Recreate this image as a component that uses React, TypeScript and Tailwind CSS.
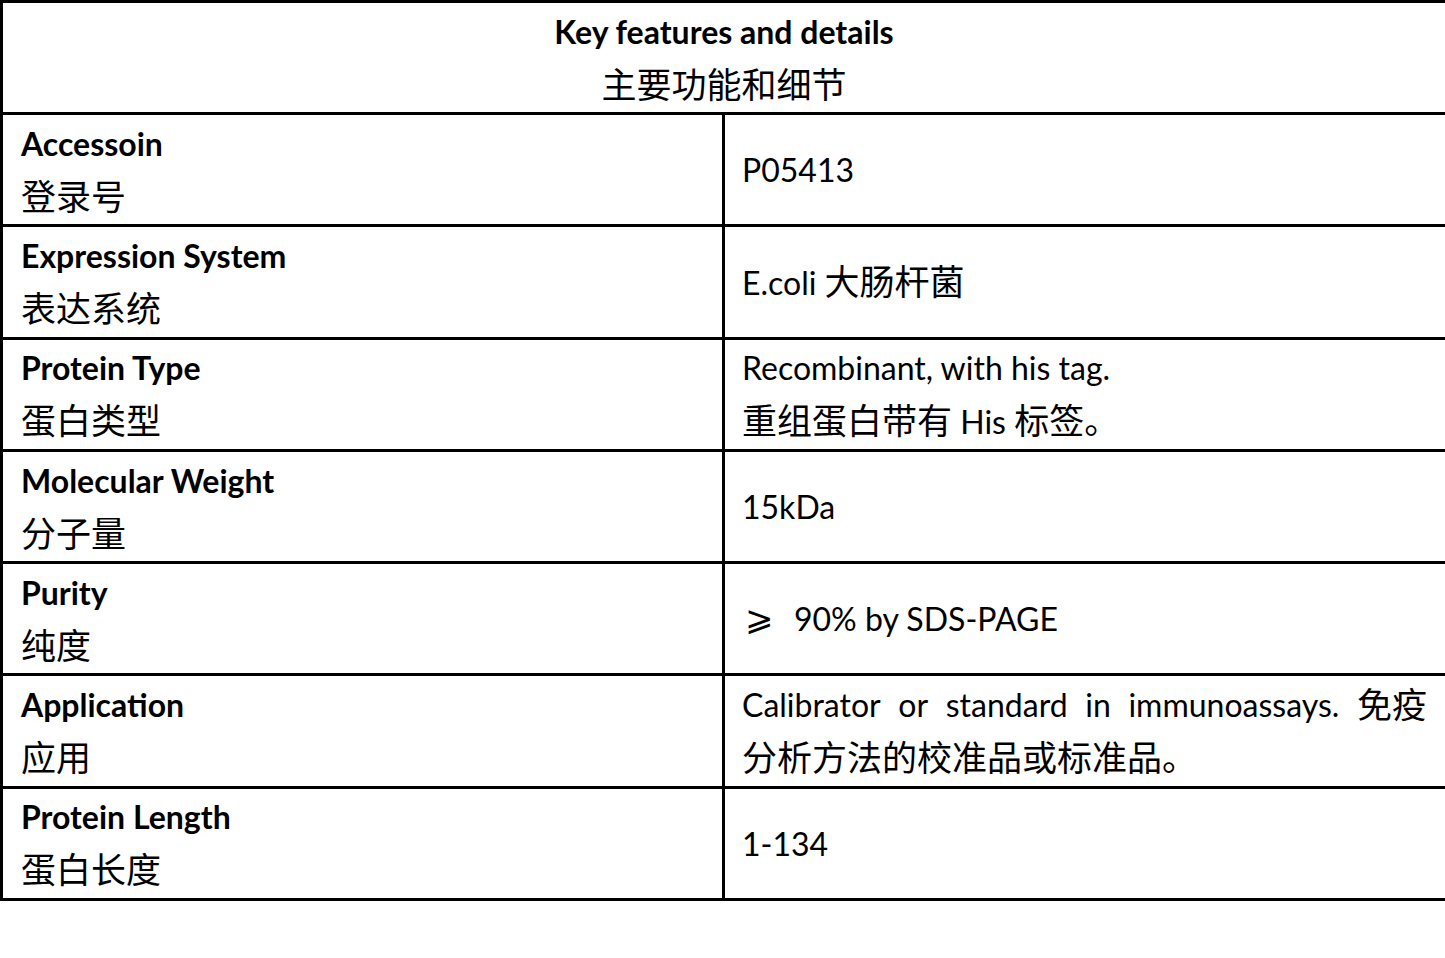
import React from "react";

const font = { fontFamily: "Lato, 'Noto Sans CJK SC', sans-serif" };

const Z = ({ children }: { children: React.ReactNode }) => (
  <span className="text-[35px]">{children}</span>
);

type Row = { en: string; zh: string; right: React.ReactNode };

const rows: Row[] = [
  { en: "Accessoin", zh: "登录号", right: <div>P05413</div> },
  {
    en: "Expression System",
    zh: "表达系统",
    right: (
      <div>
        E.coli <Z>大肠杆菌</Z>
      </div>
    ),
  },
  {
    en: "Protein Type",
    zh: "蛋白类型",
    right: (
      <div className="flex flex-col gap-[18px]">
        <div>Recombinant, with his tag.</div>
        <div>
          <Z>重组蛋白带有</Z> His <Z>标签。</Z>
        </div>
      </div>
    ),
  },
  { en: "Molecular Weight", zh: "分子量", right: <div>15kDa</div> },
  {
    en: "Purity",
    zh: "纯度",
    right: (
      <div className="flex items-center">
        <span className="inline-block w-[52px] pl-[3px] text-[34px]" style={{ fontFamily: "'DejaVu Sans', sans-serif", fontWeight: 200 }}>
          ⩾
        </span>
        <span>90% by SDS-PAGE</span>
      </div>
    ),
  },
  {
    en: "Application",
    zh: "应用",
    right: (
      <div className="flex flex-col gap-[18px] pr-[18px]">
        <div className="flex justify-between">
          <span>Calibrator</span>
          <span>or</span>
          <span>standard</span>
          <span>in</span>
          <span>immunoassays.</span>
          <Z>免疫</Z>
        </div>
        <div>
          <Z>分析方法的校准品或标准品。</Z>
        </div>
      </div>
    ),
  },
  { en: "Protein Length", zh: "蛋白长度", right: <div>1-134</div> },
];

export default function App() {
  return (
    <div className="w-full h-[958px] bg-white overflow-hidden text-black" style={font}>
      <div className="w-[1460px] border-t-[3px] border-l-[3px] border-black">
        <div className="h-[112px] border-b-[3px] border-black box-border flex flex-col items-center justify-center gap-[18px] w-[1442px] text-[32px] leading-[35px]">
          <div className="font-bold">Key features and details</div>
          <div className="text-[35px]">主要功能和细节</div>
        </div>
        {rows.map((r, i) => (
          <div key={i} className="h-[112.3px] border-b-[3px] border-black box-border flex text-[32px] leading-[35px]">
            <div className="w-[722px] border-r-[3px] border-black box-border pl-[18px] flex flex-col justify-center gap-[18px]">
              <div className="font-bold">{r.en}</div>
              <div className="text-[35px]">{r.zh}</div>
            </div>
            <div className="w-[720px] pl-[17px] flex flex-col justify-center">{r.right}</div>
          </div>
        ))}
      </div>
    </div>
  );
}
